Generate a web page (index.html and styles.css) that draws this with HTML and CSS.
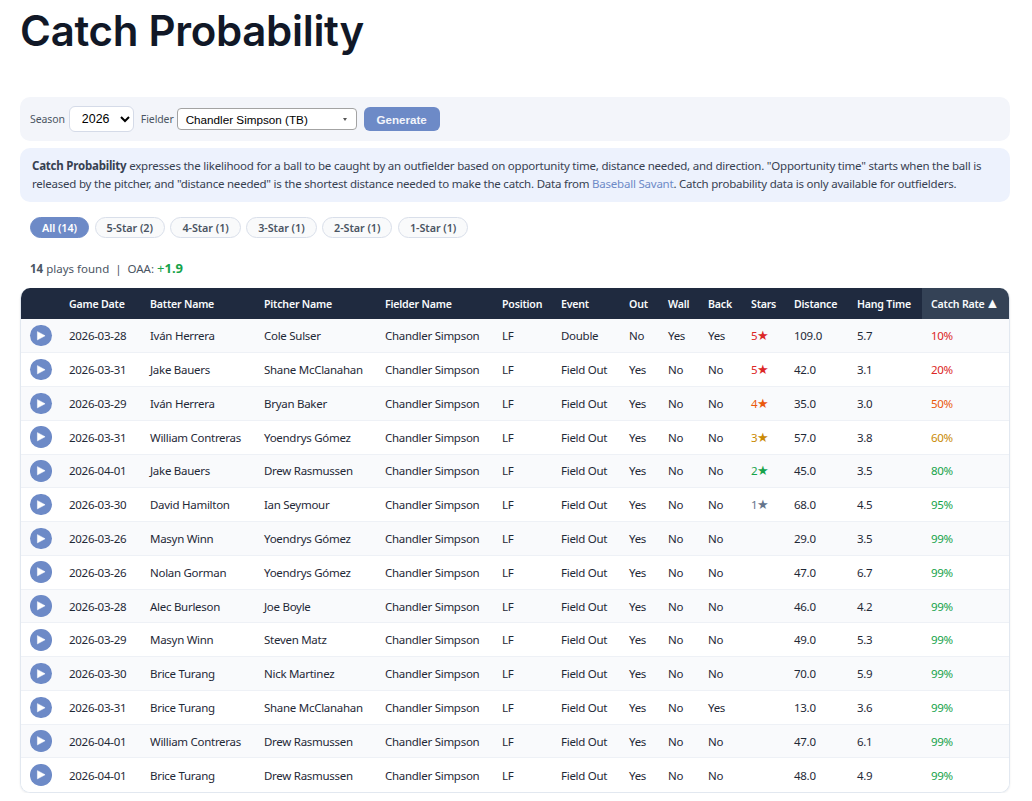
FILE: index.html
```html
<!DOCTYPE html>
<html lang="en">
<head>
<meta charset="utf-8">
<title>Catch Probability</title>
<link rel="stylesheet" href="styles.css">
</head>
<body>
<main class="page">
  <h1 class="title">Catch Probability</h1>
  <form class="controls">
    <label class="ctl-label" for="season">Season</label>
    <select class="season" id="season"><option>2026</option><option>2025</option></select>
    <span class="ctl-label">Fielder</span>
    <div class="fielder"><span>Chandler Simpson (TB)</span><i class="caret"></i></div>
    <button class="generate" type="button">Generate</button>
  </form>
  <p class="info"><b>Catch Probability</b> expresses the likelihood for a ball to be caught by an outfielder based on opportunity time, distance needed, and direction. "Opportunity time" starts when the ball is released by the pitcher, and "distance needed" is the shortest distance needed to make the catch. Data from <a href="#">Baseball Savant</a>. Catch probability data is only available for outfielders.</p>
  <div class="pills">
    <span class="pill on">All (14)</span>
    <span class="pill">5-Star (2)</span>
    <span class="pill">4-Star (1)</span>
    <span class="pill">3-Star (1)</span>
    <span class="pill">2-Star (1)</span>
    <span class="pill">1-Star (1)</span>
  </div>
  <p class="summary"><b>14</b> plays found &nbsp;|&nbsp; OAA: <span class="oaa"><span class="plus">+</span><b>1.9</b></span></p>
  <div class="table-wrap">
    <table class="plays">
      <colgroup>
        <col class="c-play"><col class="c-date"><col class="c-batter"><col class="c-pitcher"><col class="c-fielder"><col class="c-pos"><col class="c-event"><col class="c-out"><col class="c-wall"><col class="c-back"><col class="c-stars"><col class="c-dist"><col class="c-hang"><col class="c-rate">
      </colgroup>
      <thead>
        <tr><th></th><th>Game Date</th><th>Batter Name</th><th>Pitcher Name</th><th>Fielder Name</th><th>Position</th><th>Event</th><th>Out</th><th>Wall</th><th>Back</th><th>Stars</th><th>Distance</th><th>Hang Time</th><th class="sorted">Catch Rate <span class="arrow">▲</span></th></tr>
      </thead>
      <tbody id="rows"></tbody>
    </table>
  </div>
</main>
<script src="app.js"></script>
</body>
</html>
```
FILE: app.js
```js
var data = [
["2026-03-28","Iván Herrera","Cole Sulser","Double","No","Yes","Yes",5,"109.0","5.7",10,"r"],
["2026-03-31","Jake Bauers","Shane McClanahan","Field Out","Yes","No","No",5,"42.0","3.1",20,"r"],
["2026-03-29","Iván Herrera","Bryan Baker","Field Out","Yes","No","No",4,"35.0","3.0",50,"o"],
["2026-03-31","William Contreras","Yoendrys Gómez","Field Out","Yes","No","No",3,"57.0","3.8",60,"y"],
["2026-04-01","Jake Bauers","Drew Rasmussen","Field Out","Yes","No","No",2,"45.0","3.5",80,"g"],
["2026-03-30","David Hamilton","Ian Seymour","Field Out","Yes","No","No",1,"68.0","4.5",95,"g"],
["2026-03-26","Masyn Winn","Yoendrys Gómez","Field Out","Yes","No","No",0,"29.0","3.5",99,"g"],
["2026-03-26","Nolan Gorman","Yoendrys Gómez","Field Out","Yes","No","No",0,"47.0","6.7",99,"g"],
["2026-03-28","Alec Burleson","Joe Boyle","Field Out","Yes","No","No",0,"46.0","4.2",99,"g"],
["2026-03-29","Masyn Winn","Steven Matz","Field Out","Yes","No","No",0,"49.0","5.3",99,"g"],
["2026-03-30","Brice Turang","Nick Martinez","Field Out","Yes","No","No",0,"70.0","5.9",99,"g"],
["2026-03-31","Brice Turang","Shane McClanahan","Field Out","Yes","No","Yes",0,"13.0","3.6",99,"g"],
["2026-04-01","William Contreras","Drew Rasmussen","Field Out","Yes","No","No",0,"47.0","6.1",99,"g"],
["2026-04-01","Brice Turang","Drew Rasmussen","Field Out","Yes","No","No",0,"48.0","4.9",99,"g"]
];
var starClass = {5:"s5",4:"s4",3:"s3",2:"s2",1:"s1"};
var play = '<button class="play" type="button" aria-label="Play"><svg viewBox="0 0 22 22" width="100%" height="100%"><path d="M7.6 6.8 L15.4 11 L7.6 15.2 Z" fill="#fff" stroke="#fff" stroke-width=".6" stroke-linejoin="round"/></svg></button>';
document.getElementById("rows").innerHTML = data.map(function (d) {
  var stars = d[7] ? '<span class="' + starClass[d[7]] + '">' + d[7] + '<span class="star">★</span></span>' : '';
  return '<tr><td>' + play + '</td><td>' + d[0] + '</td><td>' + d[1] + '</td><td>' + d[2] +
    '</td><td>Chandler Simpson</td><td>LF</td><td>' + d[3] + '</td><td>' + d[4] + '</td><td>' + d[5] +
    '</td><td>' + d[6] + '</td><td>' + stars + '</td><td>' + d[8] + '</td><td>' + d[9] +
    '</td><td class="rate-' + d[11] + '">' + d[10] + '%</td></tr>';
}).join("");
```
FILE: styles.css
```css
* { box-sizing: border-box; }
html, body { margin: 0; background: #fff; }
body { font-family: "Noto Sans", "Open Sans", sans-serif; color: #1f2937; font-size: 12px; overflow: hidden; }
.page { padding: 0 22px 0 20px; }
.title { margin: 0; padding-top: 4px; height: 97px; font-family: Inter, "Noto Sans", sans-serif; font-size: 42px; line-height: 54px; font-weight: 600; letter-spacing: -0.3px; color: #111827; }
.controls { display: flex; align-items: center; gap: 4px; height: 44px; padding: 0 10px; background: #f3f5fa; border-radius: 10px; }
.ctl-label { font-size: 10.5px; letter-spacing: -0.1px; color: #4b5563; }
.ctl-label + .fielder { margin-left: -1px; }
.season { width: 65px; height: 26px; margin-right: 3px; font: 12.4px "Liberation Sans", sans-serif; color: #000; background: #fff; border: 1px solid #d5dbe8; border-radius: 6px; padding: 0 3px 0 8px; }
.fielder { display: flex; align-items: center; justify-content: space-between; width: 180px; height: 22px; padding: 0 9px 0 8px; font: 11.7px "Liberation Sans", sans-serif; color: #000; background: #fff; border: 1px solid #a3a3a3; border-radius: 4px; }
.caret { width: 0; height: 0; border-left: 2.5px solid transparent; border-right: 2.5px solid transparent; border-top: 3px solid #555; }
.generate { height: 24px; width: 76px; margin-left: 3px; padding: 0; font: 700 11.6px "Liberation Sans", sans-serif; color: #f3f5fb; background: #6d8ac7; border: 0; border-radius: 6px; }
.info { margin: 7px 0 0; height: 54px; padding: 9px 12px 0; font-size: 11.5px; letter-spacing: -0.22px; line-height: 18px; color: #374151; background: #edf2fd; border-radius: 10px; }
.info b { font-weight: 700; }
.info a { color: #6d8ac7; text-decoration: none; }
.pills { display: flex; gap: 5.5px; margin-top: 15px; padding-left: 10px; }
.pill { display: flex; align-items: center; justify-content: center; height: 21px; padding: 0 11px; font-size: 10.8px; letter-spacing: -0.06px; font-weight: 600; color: #4b5563; background: #f9fafb; border: 1px solid #d9dfea; border-radius: 11px; }
.pill.on { color: #fff; background: #6d8ac7; border-color: #6d8ac7; padding: 0 11px; }
.summary { margin: 21px 0 0 10px; height: 18px; font-size: 11.5px; letter-spacing: 0; line-height: 18px; color: #4b5563; }
.oaa { color: #16a34a; font-size: 13px; }
.plus { font-weight: 400; }
.table-wrap { margin-top: 11px; border: 1px solid #e2e8f0; border-top: 0; border-radius: 10px; overflow: hidden; box-shadow: 0 1px 2px rgba(15,23,42,.08); }
.plays { width: 100%; table-layout: fixed; border-collapse: collapse; font-size: 11.5px; letter-spacing: -0.28px; color: #1f2937; }
.c-play { width: 39px; } .c-date { width: 81px; } .c-batter { width: 114px; } .c-pitcher { width: 121px; }
.c-fielder { width: 117px; } .c-pos { width: 59px; } .c-event { width: 68px; } .c-out { width: 39px; }
.c-wall { width: 40px; } .c-back { width: 43px; } .c-stars { width: 43px; } .c-dist { width: 63px; }
.c-hang { width: 74px; } .c-rate { width: 87px; }
.plays th { height: 31px; padding: 0 9px; text-align: left; font-size: 10.6px; letter-spacing: -0.2px; font-weight: 600; color: #f8fafc; background: #1f2a3f; white-space: nowrap; }
.plays th.sorted { background: #344256; }
.arrow { font-size: 14.5px; line-height: 0; letter-spacing: 0; margin-left: -2px; }
.plays td { height: 33.78px; padding: 0 9px; white-space: nowrap; border-bottom: 1px solid #eef1f6; }
.plays tr:last-child td { border-bottom: 0; }
.plays tbody tr:nth-child(odd) td { background: #f9fafc; }
.plays tbody tr:nth-child(even) td { background: #fff; }
.play { display: block; width: 21.5px; height: 21.5px; padding: 0; border: 0; border-radius: 50%; background: #6d8ac7; }
.play svg { display: block; }
.star { font-size: 13px; line-height: 1; }
.s5, .rate-r { color: #dc2626; }
.s4, .rate-o { color: #ea580c; }
.s3, .rate-y { color: #ca8a04; }
.s2, .rate-g { color: #16a34a; }
.s1 { color: #64748b; }
```
